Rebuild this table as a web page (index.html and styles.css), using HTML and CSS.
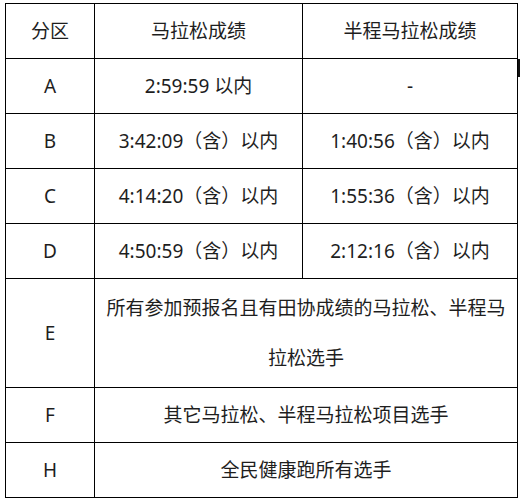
FILE: index.html
```html
<!DOCTYPE html>
<html lang="zh-CN">
<head>
<meta charset="utf-8">
<title>分区</title>
<link rel="stylesheet" href="styles.css">
</head>
<body>
<div class="wrap">
<table class="zones">
<colgroup>
<col class="c1">
<col class="c2">
<col class="c3">
</colgroup>
<tr><td>分区</td><td>马拉松成绩</td><td>半程马拉松成绩</td></tr>
<tr><td>A</td><td>2:59:59 以内</td><td>-</td></tr>
<tr><td>B</td><td>3:42:09（含）以内</td><td>1:40:56（含）以内</td></tr>
<tr><td>C</td><td>4:14:20（含）以内</td><td>1:55:36（含）以内</td></tr>
<tr><td>D</td><td>4:50:59（含）以内</td><td>2:12:16（含）以内</td></tr>
<tr class="tall"><td>E</td><td colspan="2" class="wide">所有参加预报名且有田协成绩的马拉松、半程马拉松选手</td></tr>
<tr><td>F</td><td colspan="2">其它马拉松、半程马拉松项目选手</td></tr>
<tr><td>H</td><td colspan="2">全民健康跑所有选手</td></tr>
</table>
<span class="mark"></span>
</div>
</body>
</html>
```
FILE: styles.css
```css
html, body {
  margin: 0;
  padding: 0;
  background: #fff;
}
body {
  padding: 3px 0 0 5px;
  font-family: "Noto Sans", "Noto Sans CJK SC", sans-serif;
  font-size: 19px;
  color: #1e1e1e;
}
.wrap {
  position: relative;
  width: 517px;
}
.zones {
  border-collapse: collapse;
  table-layout: fixed;
  width: 512px;
}
.c1 { width: 89px; }
.c2 { width: 208px; }
.c3 { width: 215px; }
.zones td {
  border: 1px solid #000;
  height: 54px;
  padding: 0 4px;
  text-align: center;
  vertical-align: middle;
  line-height: 24px;
  white-space: nowrap;
}
.zones td.wide {
  white-space: normal;
  line-height: 50px;
  height: 108px;
  padding: 4px 4px;
  box-sizing: border-box;
}
.mark {
  position: absolute;
  left: 513px;
  top: 56px;
  width: 2px;
  height: 18px;
  background: #111;
}
```
